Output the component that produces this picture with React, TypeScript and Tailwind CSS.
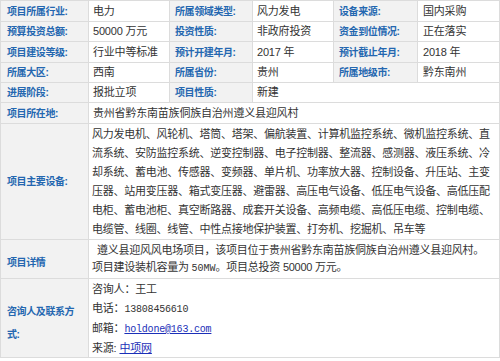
const sans = "font-['Liberation_Sans','Noto_Sans_CJK_SC',sans-serif]";

const labelCls =
  "bg-[#f2f2f2] flex items-center pl-[5px] text-[10px] font-bold tracking-[-0.4px] text-[#2467b0] whitespace-nowrap overflow-hidden";
const valueCls =
  "bg-white flex items-center pl-[4px] text-[11px] tracking-[-0.2px] text-[#333] whitespace-nowrap overflow-hidden";

const equipment = [
  "风力发电机、风轮机、塔筒、塔架、偏航装置、计算机监控系统、微机监控系统、直",
  "流系统、安防监控系统、逆变控制器、电子控制器、整流器、感测器、液压系统、冷",
  "却系统、蓄电池、传感器、变频器、单片机、功率放大器、控制设备、升压站、主变",
  "压器、站用变压器、箱式变压器、避雷器、高压电气设备、低压电气设备、高低压配",
  "电柜、蓄电池柜、真空断路器、成套开关设备、高频电缆、高低压电缆、控制电缆、",
  "电缆管、线圈、线管、中性点接地保护装置、打夯机、挖掘机、吊车等",
];

function Label({ children, className = "" }: { children: React.ReactNode; className?: string }) {
  return <div className={`${labelCls} ${className}`}>{children}</div>;
}

function Value({ children, className = "" }: { children: React.ReactNode; className?: string }) {
  return <div className={`${valueCls} ${className}`}>{children}</div>;
}

export default function App() {
  return (
    <div className={`w-[500px] h-[361px] bg-white ${sans}`}>
      <div className="grid grid-cols-[87px_80px_82px_80px_83px_81px] grid-rows-[20px_19px_20px_19px_19px_20px_115px_38px_78px] gap-px p-px bg-[#dcdcdc] w-[500px]">
        <Label className="pl-[6px]">项目所属行业:</Label>
        <Value className="pl-[3px]">电力</Value>
        <Label>所属领域类型:</Label>
        <Value>风力发电</Value>
        <Label className="pl-[4px]">设备来源:</Label>
        <Value className="pl-[5px]">国内采购</Value>

        <Label className="pl-[6px]">预算投资总额:</Label>
        <Value className="pl-[3px]">50000 万元</Value>
        <Label>投资性质:</Label>
        <Value>非政府投资</Value>
        <Label className="pl-[4px]">资金到位情况:</Label>
        <Value className="pl-[5px]">正在落实</Value>

        <Label className="pl-[6px]">项目建设等级:</Label>
        <Value className="pl-[3px]">行业中等标准</Value>
        <Label>预计开建年月:</Label>
        <Value>2017 年</Value>
        <Label className="pl-[4px]">预计截止年月:</Label>
        <Value className="pl-[5px]">2018 年</Value>

        <Label className="pl-[6px]">所属大区:</Label>
        <Value className="pl-[3px]">西南</Value>
        <Label>所属省份:</Label>
        <Value>贵州</Value>
        <Label className="pl-[4px]">所属地级市:</Label>
        <Value className="pl-[5px]">黔东南州</Value>

        <Label className="pl-[6px]">进展阶段:</Label>
        <Value className="pl-[3px]">报批立项</Value>
        <Label>项目性质:</Label>
        <Value className="col-span-3">新建</Value>

        <Label className="pl-[6px]">项目所在地:</Label>
        <Value className="col-span-5 pl-[3px]">贵州省黔东南苗族侗族自治州遵义县迎风村</Value>

        <Label className="pl-[6px]">项目主要设备:</Label>
        <div className="col-span-5 bg-white pl-[3px] pt-[1px] text-[11px] tracking-[-0.25px] leading-[19px] text-[#333] flex flex-col justify-center">
          {equipment.map((line) => (
            <div key={line} className="whitespace-nowrap">
              {line}
            </div>
          ))}
        </div>

        <Label className="pl-[6px] pt-[6px]">项目详情</Label>
        <div className="col-span-5 bg-white pl-[3px] text-[11px] tracking-[-0.25px] leading-[17px] text-[#333] flex flex-col justify-center">
          <div className="whitespace-nowrap pl-[5px]">
            遵义县迎风风电场项目，该项目位于贵州省黔东南苗族侗族自治州遵义县迎风村。
          </div>
          <div className="whitespace-nowrap">
            项目建设装机容量为 <span className="font-['Liberation_Mono',monospace] text-[10px] tracking-normal">50MW</span>。项目总投资 50000 万元。
          </div>
        </div>

        <div className="bg-[#f2f2f2] flex flex-col justify-center pl-[6px] pt-[10px] text-[10px] font-bold tracking-[-0.4px] leading-[23px] text-[#2467b0]">
          <div>咨询人及联系方</div>
          <div>式:</div>
        </div>
        <div className="col-span-5 bg-white pl-[3px] pt-[1px] text-[11px] tracking-[-0.2px] leading-[19px] text-[#333] flex flex-col justify-center">
          <div>咨询人：王工</div>
          <div>
            电话：<span className="font-['Liberation_Mono',monospace] text-[10px] tracking-[-0.2px]">13808456610</span>
          </div>
          <div>
            邮箱：
            <a className="font-['Liberation_Mono',monospace] text-[10px] tracking-[-0.2px] text-[#1b2fb8] underline">
              holdone@163.com
            </a>
          </div>
          <div>
            来源:<a className="ml-[3px] text-[#1b2fb8] underline">中项网</a>
          </div>
        </div>
      </div>
    </div>
  );
}
